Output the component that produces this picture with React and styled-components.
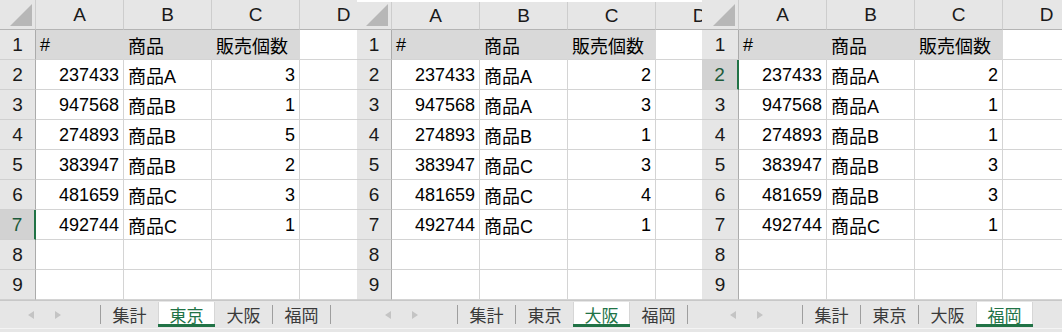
import React from "react";
import styled, { createGlobalStyle } from "styled-components";

const GREEN = "#217346";
const COLS = ["A", "B", "C", "D"];
const TABS = ["集計", "東京", "大阪", "福岡"];

const sheets = [
  {
    width: 357,
    rowHead: 36,
    top: 0,
    activeRow: 7,
    activeTab: 1,
    rows: [
      [237433, "商品A", 3],
      [947568, "商品B", 1],
      [274893, "商品B", 5],
      [383947, "商品B", 2],
      [481659, "商品C", 3],
      [492744, "商品C", 1],
    ],
  },
  {
    width: 345,
    rowHead: 35,
    top: 2,
    activeRow: null,
    activeTab: 2,
    rows: [
      [237433, "商品A", 2],
      [947568, "商品A", 3],
      [274893, "商品B", 1],
      [383947, "商品C", 3],
      [481659, "商品C", 4],
      [492744, "商品C", 1],
    ],
  },
  {
    width: 360,
    rowHead: 37,
    top: 0,
    activeRow: 2,
    activeTab: 3,
    rows: [
      [237433, "商品A", 2],
      [947568, "商品A", 1],
      [274893, "商品B", 1],
      [383947, "商品B", 3],
      [481659, "商品B", 3],
      [492744, "商品C", 1],
    ],
  },
];

function Sheet({ sheet }) {
  const body = [["#", "商品", "販売個数"], ...sheet.rows, null, null];

  return (
    <SheetWrap $w={sheet.width}>
      <Grid $rh={sheet.rowHead} $top={sheet.top}>
        <Corner>
          <Triangle />
        </Corner>
        {COLS.map((c) => (
          <ColHead key={c}>{c}</ColHead>
        ))}
        {body.map((row, i) => {
          const n = i + 1;
          const isTitle = i === 0;
          return (
            <React.Fragment key={n}>
              <RowHead $active={sheet.activeRow === n}>{n}</RowHead>
              <Cell $shade={isTitle} $align={isTitle ? "left" : "right"}>
                {row ? row[0] : ""}
              </Cell>
              <Cell $shade={isTitle}>{row ? row[1] : ""}</Cell>
              <Cell $shade={isTitle} $align={isTitle ? "left" : "right"}>
                {row ? row[2] : ""}
              </Cell>
              <Cell />
            </React.Fragment>
          );
        })}
      </Grid>
      <TabBar>
        <TabRow>
          <Nav>
            <ArrowLeft />
            <ArrowRight />
          </Nav>
          {sheet.activeTab !== 0 && <Sep />}
          {TABS.map((t, i) => (
            <React.Fragment key={t}>
              <Tab $active={sheet.activeTab === i}>{t}</Tab>
              {sheet.activeTab !== i && sheet.activeTab !== i + 1 && <Sep />}
            </React.Fragment>
          ))}
        </TabRow>
        <Foot />
      </TabBar>
    </SheetWrap>
  );
}

export default function App() {
  return (
    <>
      <GlobalStyle />
      <Page>
        {sheets.map((s, i) => (
          <Sheet key={i} sheet={s} />
        ))}
      </Page>
    </>
  );
}

const GlobalStyle = createGlobalStyle`
  * { box-sizing: border-box; }
  body {
    margin: 0;
    background: #ffffff;
    font-family: "Liberation Sans", "Noto Sans CJK JP", sans-serif;
    font-size: 18px;
    color: #000;
  }
`;

const Page = styled.div`
  display: flex;
  width: 1062px;
  height: 332px;
  overflow: hidden;
`;

const SheetWrap = styled.div`
  flex: none;
  width: ${(p) => p.$w}px;
  height: 332px;
  display: flex;
  flex-direction: column;
  overflow: hidden;
`;

const Grid = styled.div`
  display: grid;
  grid-template-columns: ${(p) => p.$rh}px repeat(4, 88px);
  grid-template-rows: ${(p) => 30 - p.$top}px repeat(9, 30px);
  border-top: ${(p) => p.$top}px solid #ffffff;
  width: max-content;
`;

const Corner = styled.div`
  display: flex;
  align-items: flex-end;
  justify-content: flex-end;
  padding: 0 3px 3px 0;
  background: #e6e6e6;
  border-right: 1px solid #cdcdcd;
  border-bottom: 1px solid #b4b4b4;
`;

const Triangle = styled.div`
  width: 22px;
  height: 22px;
  background: #b7b7b7;
  clip-path: polygon(100% 0, 100% 100%, 0 100%);
`;

const ColHead = styled.div`
  display: flex;
  align-items: center;
  justify-content: center;
  padding-top: 1px;
  font-size: 19px;
  background: #e6e6e6;
  color: #1a1a1a;
  border-right: 1px solid #cdcdcd;
  border-bottom: 1px solid #b4b4b4;
`;

const RowHead = styled.div`
  display: flex;
  align-items: center;
  justify-content: center;
  padding-top: 1px;
  font-size: 19px;
  background: ${(p) => (p.$active ? "#d2d2d2" : "#e6e6e6")};
  color: ${(p) => (p.$active ? "#1d5a3a" : "#1a1a1a")};
  border-right: ${(p) => (p.$active ? `2px solid ${GREEN}` : "1px solid #ababab")};
  border-bottom: 1px solid #d0d0d0;
`;

const Cell = styled.div`
  display: flex;
  align-items: center;
  justify-content: ${(p) => (p.$align === "right" ? "flex-end" : "flex-start")};
  padding: 1px 4px 0 4px;
  white-space: nowrap;
  background: ${(p) => (p.$shade ? "#d9d9d9" : "#ffffff")};
  border-right: 1px solid ${(p) => (p.$shade ? "#d9d9d9" : "#d4d4d4")};
  border-bottom: 1px solid #d4d4d4;
`;

const TabBar = styled.div`
  display: flex;
  flex-direction: column;
  height: 32px;
  background: #e6e6e6;
  border-top: 1px solid #c8c8c8;
`;

const TabRow = styled.div`
  display: flex;
  align-items: flex-start;
  height: 26px;
`;

const Nav = styled.div`
  flex: none;
  width: 100px;
  height: 25px;
  display: flex;
  align-items: center;
  gap: 21px;
  padding: 3px 0 0 28px;
`;

const ArrowLeft = styled.span`
  width: 0;
  height: 0;
  border-top: 4px solid transparent;
  border-bottom: 4px solid transparent;
  border-right: 6px solid #c4c4c4;
`;

const ArrowRight = styled.span`
  width: 0;
  height: 0;
  border-top: 4px solid transparent;
  border-bottom: 4px solid transparent;
  border-left: 6px solid #c4c4c4;
`;

const Sep = styled.span`
  flex: none;
  width: 1px;
  height: 19px;
  margin-top: 4px;
  background: #9e9e9e;
`;

const Tab = styled.div`
  flex: none;
  width: 57px;
  height: 25px;
  margin-top: 1px;
  display: flex;
  align-items: center;
  justify-content: center;
  font-size: 17px;
  color: ${(p) => (p.$active ? GREEN : "#3a3a3a")};
  background: ${(p) => (p.$active ? "#ffffff" : "transparent")};
  border-bottom: 3px solid ${(p) => (p.$active ? GREEN : "transparent")};
  box-shadow: ${(p) => (p.$active ? "inset 1px 0 #d6d6d6, inset -1px 0 #d6d6d6" : "none")};
  padding-top: 2px;
`;

const Foot = styled.div`
  height: 5px;
  margin-top: 1px;
  border-top: 1px solid #f4f4f4;
`;
